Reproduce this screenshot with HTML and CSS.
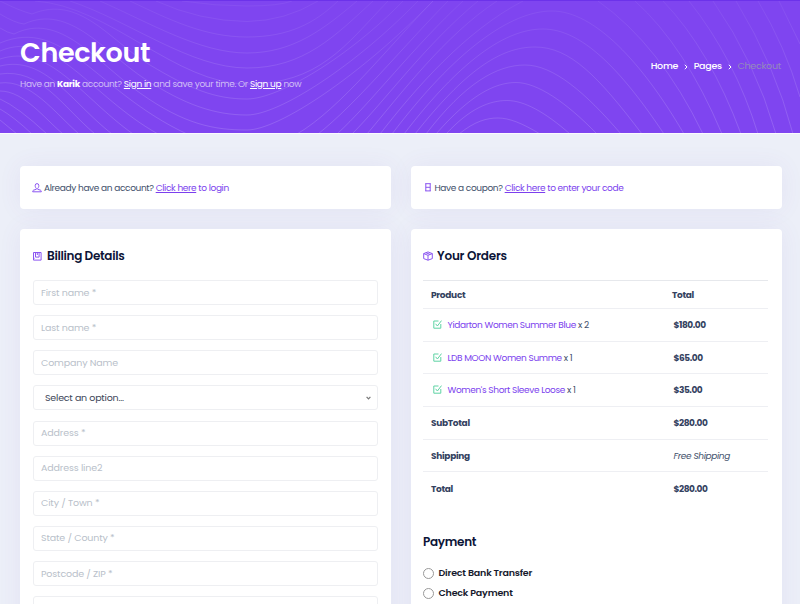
FILE: index.html
```html
<!DOCTYPE html>
<html lang="en">
<head>
<meta charset="utf-8">
<title>Checkout</title>
<link rel="stylesheet" href="styles.css">
</head>
<body>
<header class="hero">
  <svg class="waves" viewBox="0 0 800 133" aria-hidden="true">
    <defs>
      <linearGradient id="fade" gradientUnits="userSpaceOnUse" x1="0" y1="0" x2="0" y2="133">
        <stop offset="0" stop-color="#fff" stop-opacity=".05"/>
        <stop offset=".5" stop-color="#fff" stop-opacity=".11"/>
        <stop offset="1" stop-color="#fff" stop-opacity=".15"/>
      </linearGradient>
    </defs>
    <g fill="none" stroke="url(#fade)">
      <path d="M182 0Q215 5 247 5T292 0"/>
      <path d="M156 0Q200 20 247 20.500Q285 20 318 0"/>
      <path d="M130 0C170 19 205 36 247 36S315 22 338 0"/>
      <path d="M100 0C150 22 200 52 247 52S325 27 357 0"/>
      <path d="M70 0C130 20 190 67 247 67S335 35 373 0"/>
      <path d="M35 0C110 5 175 83 247 83S345 45 388 0"/>
      <path d="M0 0Q20 10 32 13C80-7 110 40 150 64S215 98 247 98S350 55 403 0"/>
      <path d="M0 13Q15 22 24 23C70 2 105 52 145 78S215 114 247 114S355 65 418 0"/>
      <path d="M0 27Q8 32 14 33C60 10 95 60 140 92S215 129 247 129S360 75 433 0"/>
      <path d="M0 42C65 15 95 90 187 133"/>
      <path d="M0 50C55 27 90 95 158 133"/>
      <path d="M0 58C50 42 80 95 133 133"/>
      <path d="M0 65C45 54 70 100 112 133"/>
      <path d="M0 73C40 67 62 105 95 133"/>
      <path d="M0 82C30 78 55 112 79 133"/>
      <path d="M0 90C24 90 45 118 63 133"/>
      <path d="M0 98Q18 106 47 133"/>
      <path d="M0 108Q14 116 32 133"/>
      <path d="M0 119L17 133"/>
      <path d="M297 133C340 108 390 44 433 0"/>
      <path d="M318 133C355 104 402 47 448 0"/>
      <path d="M337 133C370 103 415 44 463 0"/>
      <path d="M352 133C385 100 425 44 478 0"/>
      <path d="M367 133C400 94 445 34 497 0"/>
      <path d="M380 133C415 88 465 30 523 0"/>
      <path d="M392 133C455 50 510 10 552 10S642 61 684 133"/>
      <path d="M404 133C460 60 505 28 543 28S620 67 664 133"/>
      <path d="M415 133C465 70 500 46 535 46S598 75 642 133"/>
      <path d="M426 133C465 82 497 64 525 64S585 91 621 133"/>
      <path d="M436 133C470 94 495 81.500 516 81.500S566 101 597 133"/>
      <path d="M446 133C470 107 490 99.500 507 99.500S545 111 570 133"/>
      <path d="M459 133C475 120 487 117 498 117S522 122 540 133"/>
      <path d="M598 0Q660 44 703 133"/>
      <path d="M635 0Q685 45 722 133"/>
      <path d="M663 0Q710 49 741 133"/>
      <path d="M689 0Q735 58 758 133"/>
      <path d="M713 0Q755 60 776 133"/>
      <path d="M736 0Q775 64 793 133"/>
      <path d="M758 0Q785 45 800 96"/>
      <path d="M779 0L800 43"/>
    </g>
  </svg>
  <div class="hero-copy">
    <h1>Checkout</h1>
    <p>Have an <b>Karik</b> account? <a href="#">Sign in</a> and save your time. Or <a href="#">Sign up</a> now</p>
  </div>
  <nav class="crumbs">
    <a href="#">Home</a>
    <svg viewBox="0 0 4 6"><path d="M.8 .8L3 3L.8 5.200"/></svg>
    <a href="#">Pages</a>
    <svg viewBox="0 0 4 6"><path d="M.8 .8L3 3L.8 5.200"/></svg>
    <span>Checkout</span>
  </nav>
</header>
<main class="columns">
  <div class="column">
    <section class="card notice">
      <svg class="user" viewBox="0 0 10 10"><path d="M3.200 2.500a1.800 1.900 0 0 1 3.600 0c0 1.500-.5 2.300-1.100 2.800v1l2.800.9c.6.200.8.700.8 1.600H.7c0-.9.200-1.400.8-1.600l2.800-.9v-1C3.700 4.800 3.200 4 3.200 2.500z"/></svg>
      <span>Already have an account? <a href="#"><u>Click here</u> to login</a></span>
    </section>
    <section class="card panel">
      <h2><svg class="book" viewBox="0 0 9 9"><path d="M.5.500h7.600v7.600H.5zM2.500.500v4.600h3.600V.500M4.300.500v2.500M.5 6.300h1"/></svg><span>Billing Details</span></h2>
      <form class="fields">
        <input placeholder="First name *">
        <input placeholder="Last name *">
        <input placeholder="Company Name">
        <div class="select"><span>Select an option...</span><svg viewBox="0 0 5 4"><path d="M.6.800L2.500 2.900L4.400.800"/></svg></div>
        <input placeholder="Address *">
        <input placeholder="Address line2">
        <input placeholder="City / Town *">
        <input placeholder="State / County *">
        <input placeholder="Postcode / ZIP *">
        <input>
      </form>
    </section>
  </div>
  <div class="column">
    <section class="card notice coupon">
      <svg class="ticket" viewBox="0 0 6 9"><path d="M.8.500v7.600M5.200.500v7.600M.3.700h5.400M.3 7.900h5.400M.8 4.300h4.400"/></svg>
      <span>Have a coupon? <a href="#"><u>Click here</u> to enter your code</a></span>
    </section>
    <section class="card panel">
      <h2><svg class="box" viewBox="0 0 10 10"><path d="M.7 2.600L5 .9l4.300 1.700v5L5 9.200.7 7.600zM.7 2.600L5 4.300l4.300-1.700M5 4.300v4.900M2.800 1.700l4.300 1.700"/></svg><span>Your Orders</span></h2>
      <table class="orders">
        <thead><tr><th>Product</th><th>Total</th></tr></thead>
        <tbody>
          <tr><td><svg class="check" viewBox="0 0 9 9"><path d="M5.500 1H.8v7.200h7V4M2.600 3.800l1.800 2.200L8.500.600"/></svg><a href="#">Yidarton Women Summer Blue</a> x 2</td><td><b>$180.00</b></td></tr>
          <tr><td><svg class="check" viewBox="0 0 9 9"><path d="M5.500 1H.8v7.200h7V4M2.600 3.800l1.800 2.200L8.500.600"/></svg><a href="#">LDB MOON Women Summe</a> x 1</td><td><b>$65.00</b></td></tr>
          <tr><td><svg class="check" viewBox="0 0 9 9"><path d="M5.500 1H.8v7.200h7V4M2.600 3.800l1.800 2.200L8.500.600"/></svg><a href="#">Women's Short Sleeve Loose</a> x 1</td><td><b>$35.00</b></td></tr>
        </tbody>
        <tfoot>
          <tr><th>SubTotal</th><td><b>$280.00</b></td></tr>
          <tr><th>Shipping</th><td><i>Free Shipping</i></td></tr>
          <tr><th>Total</th><td><b>$280.00</b></td></tr>
        </tfoot>
      </table>
      <h3>Payment</h3>
      <div class="payments">
        <label><input type="radio" name="pay"><span>Direct Bank Transfer</span></label>
        <label><input type="radio" name="pay"><span>Check Payment</span></label>
      </div>
    </section>
  </div>
</main>
</body>
</html>
```
FILE: styles.css
```css
* { box-sizing: border-box; }
html, body { height: 100%; }
body {
  margin: 0;
  overflow: hidden;
  background: #eceff8;
  color: #42506b;
  font: 9px/14px Poppins, Inter, "Open Sans", sans-serif;
  letter-spacing: -0.36px;
}
a { color: #7c3fee; text-decoration: none; }
svg { fill: none; stroke: currentColor; flex: none; }

.hero {
  position: relative;
  display: flex;
  align-items: center;
  justify-content: space-between;
  height: 134px;
  padding: 0 19px 0 20px;
  background: #7f45f0;
  border-top: 1px solid #6c32ea;
  border-bottom: 1px solid #fbfaff;
  color: #d0bdf6;
}
.waves { position: absolute; left: 0; top: 0; width: 800px; height: 133px; }
.hero-copy, .crumbs { position: relative; }
.hero-copy { padding-bottom: 8px; }
.hero h1 { margin: 0; font-size: 27px; line-height: 34px; font-weight: 600; color: #fff; letter-spacing: -0.35px; }
.hero p { margin: 7px 0 0; letter-spacing: -0.32px; }
.hero p b { color: #fff; }
.hero p a { color: #fff; text-decoration: underline; }
.crumbs { display: flex; align-items: center; padding-bottom: 2px; font-size: 9.500px; letter-spacing: -0.25px; }
.crumbs a { color: #fff; font-weight: 500; }
.crumbs svg { width: 4px; height: 6px; margin: 1px 5.500px 0 6px; color: #fff; }
.crumbs span { color: #958abb; }

.columns {
  display: grid;
  grid-template-columns: 371px 371.500px;
  column-gap: 19.500px;
  padding: 32px 18px 0 20px;
}
.column { display: flex; flex-direction: column; gap: 20px; }
.card {
  background: #fff;
  border-radius: 4px;
  box-shadow: 0 0 24px rgba(110, 70, 190, .07);
}
.notice { display: flex; align-items: center; height: 43px; padding: 0 13px 0 12px; }
.user { width: 10px; height: 10px; margin-right: 2px; color: #8b55f1; }
.ticket { width: 6px; height: 9px; margin: 0 4px 0 2px; color: #8b55f1; }
.panel { height: 420px; padding: 18px 13px 0; }
h2 { display: flex; align-items: center; margin: 0 0 15px; height: 18px; font-size: 12px; font-weight: 600; color: #0b1437; letter-spacing: -0.3px; }
h2 svg { color: #8b55f1; }
.book { width: 9px; height: 9px; margin-right: 5px; }
.box { width: 10px; height: 10px; margin-right: 4px; }

.fields { display: grid; row-gap: 10.150px; }
.fields input, .select {
  width: 345px;
  height: 25px;
  padding: 0 7px;
  border: 1px solid #eeeff2;
  border-radius: 3px;
  background: #fff;
  font: inherit;
  font-size: 9.500px;
  letter-spacing: -0.15px;
}
.fields input::placeholder { color: #b9bfca; opacity: 1; }
.select { display: flex; align-items: center; justify-content: space-between; padding: 0 6px 0 11px; color: #3d4658; letter-spacing: -0.22px; }
.select svg { width: 5px; height: 4px; color: #777; stroke-width: 1.200; }

.column:last-child .panel { padding-left: 12.500px; }
.column:last-child h2 { letter-spacing: -0.2px; }
.orders { width: 345px; border-collapse: separate; border-spacing: 0; table-layout: fixed; border-top: 1px solid #e6e8ec; }
.orders th, .orders td { height: 32.700px; padding: 0 8px; text-align: left; font-weight: 400; border-bottom: 1px solid #eeeff3; }
.orders thead th { height: 28px; }
.orders th { font-weight: 700; color: #34425f; letter-spacing: -0.3px; }
.orders th:last-child { padding-left: 8px; }
.orders td:last-child { padding-left: 9.500px; }
.orders b { font-weight: 700; color: #34425f; letter-spacing: -0.45px; }
.orders tr > :first-child { width: 241px; }
.orders tfoot tr:last-child > * { border-bottom: 0; }
.check { width: 9px; height: 9px; margin: 0 5.500px 0 2px; vertical-align: -1px; color: #5fd3a4; }
h3 { margin: 28px 0 15px; font-size: 12px; line-height: 18px; font-weight: 600; color: #0b1437; letter-spacing: -0.3px; }
.payments { display: grid; row-gap: 6px; }
.payments label { display: flex; align-items: center; height: 14px; color: #16192c; font-size: 9.500px; font-weight: 600; letter-spacing: -0.2px; }
.payments input { appearance: none; width: 11px; height: 11px; margin: 1px 4.500px 0 0; border: 1px solid #999; border-radius: 50%; }
```
